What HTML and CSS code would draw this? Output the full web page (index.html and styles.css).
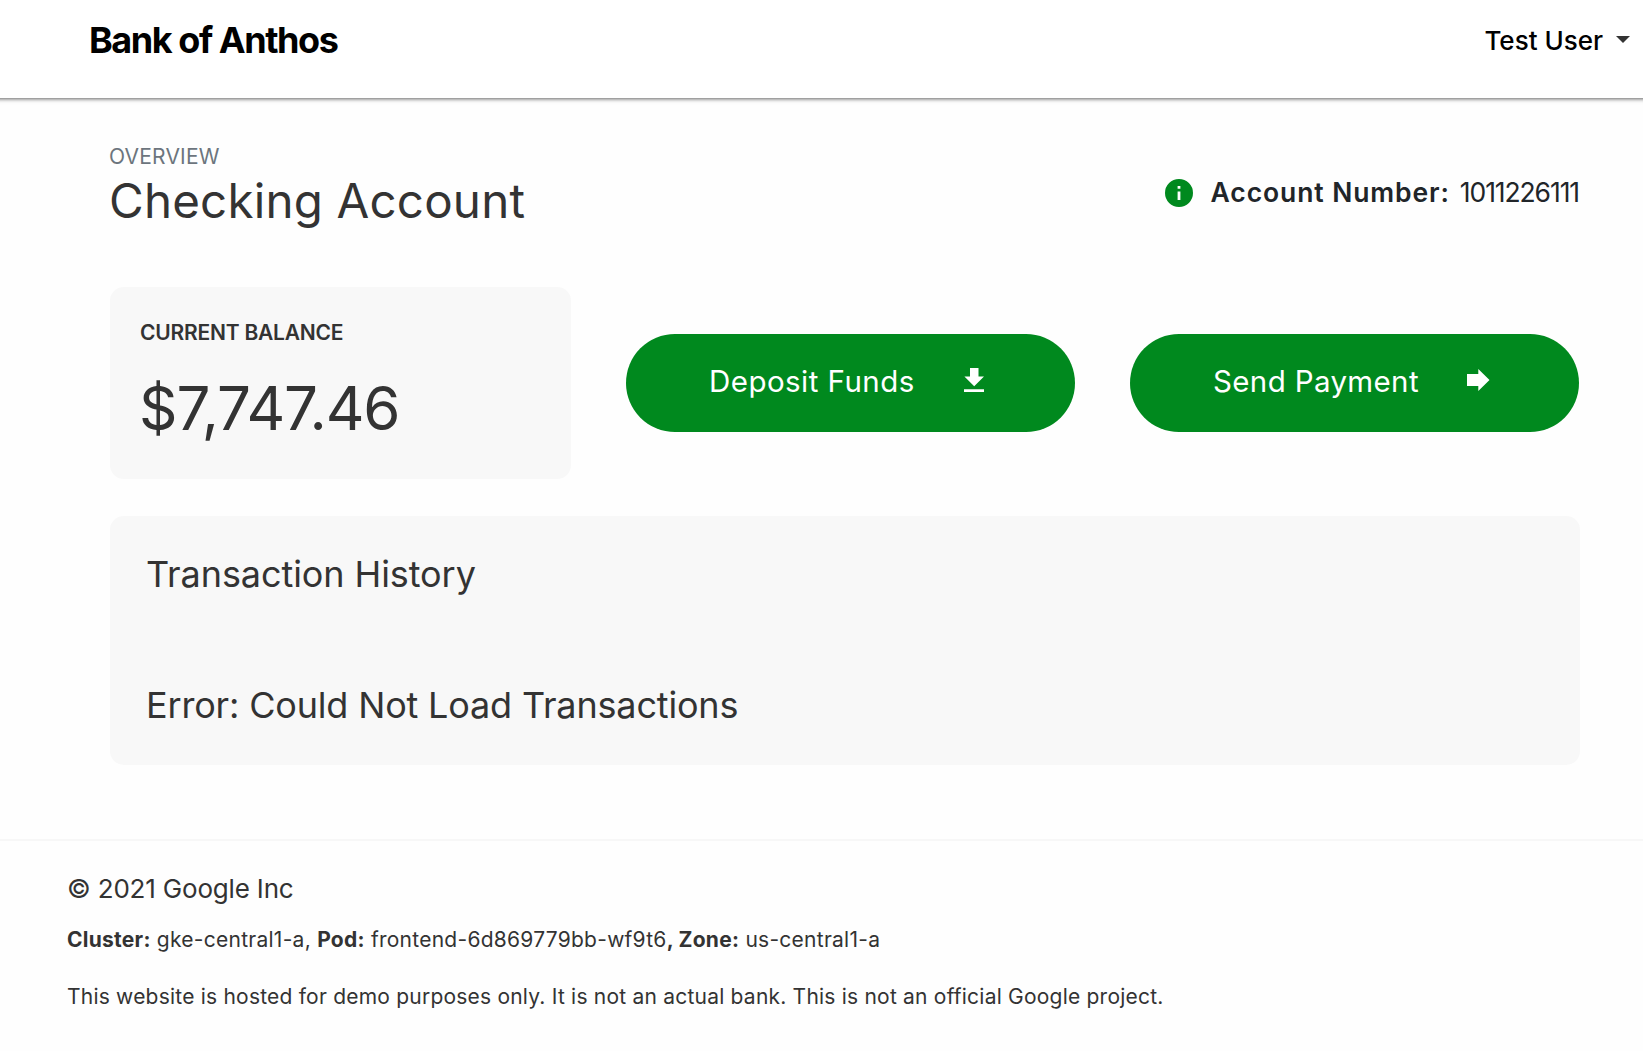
FILE: index.html
```html
<!DOCTYPE html>
<html lang="en">
<head>
<meta charset="utf-8">
<title>Bank of Anthos</title>
<link rel="stylesheet" href="styles.css">
</head>
<body>
<header class="navbar">
  <a class="brand">Bank of Anthos</a>
  <div class="user"><span>Test User</span><svg class="caret" viewBox="0 0 14 7"><path d="M0 0H14L7 7Z"/></svg></div>
</header>
<main class="main">
  <section class="heading">
    <div>
      <div class="overline">OVERVIEW</div>
      <h1 class="title">Checking Account</h1>
    </div>
    <div class="account">
      <svg class="info" viewBox="2 2 20 20"><path d="M12 2a10 10 0 1 0 0 20 10 10 0 0 0 0-20zm1 15h-2v-6h2zm0-8h-2V7h2z"/></svg>
      <b class="account-label">Account Number:</b><span class="account-number">1011226111</span>
    </div>
  </section>
  <section class="summary">
    <div class="card balance">
      <div class="balance-label">CURRENT BALANCE</div>
      <div class="balance-value">$7,747.46</div>
    </div>
    <button class="action deposit"><span>Deposit Funds</span><svg class="icon-down" viewBox="0 0 20 24"><path d="M6 0h8.5v8.5H20l-9.8 9.7L.4 8.500H6zM0 21.200h20V24H0z"/></svg></button>
    <button class="action send"><span>Send Payment</span><svg class="icon-right" viewBox="0 0 22.500 22"><path d="M0 5h11.300V0l11.200 11-11.200 11v-5H0z"/></svg></button>
  </section>
  <section class="card history">
    <h2 class="h2">Transaction History</h2>
    <h2 class="h2 error">Error: Could Not Load Transactions</h2>
  </section>
</main>
<footer class="footer">
  <p class="copyright">© 2021 Google Inc</p>
  <p class="meta"><b>Cluster:</b> gke-central1-a, <b>Pod:</b> frontend-6d869779bb-wf9t6<b>, Zone:</b> us-central1-a</p>
  <p class="note">This website is hosted for demo purposes only. It is not an actual bank. This is not an official Google project.</p>
</footer>
</body>
</html>
```
FILE: styles.css
```css
* { box-sizing: border-box; margin: 0; padding: 0; }
body { background: #fefefe; color: #333; font-family: Inter, "Liberation Sans", sans-serif; white-space: nowrap; overflow-x: hidden; }
h1, h2 { font-weight: 400; }
b { font-weight: 700; }
.navbar { height: 98px; margin: 0 -8px; display: flex; justify-content: space-between; background: #fff; padding: 0 21px 0 97px; box-shadow: 0 1px 4px rgba(0,0,0,.62); color: #000; }
.brand { font-size: 36px; line-height: 81px; font-weight: 650; letter-spacing: -1.45px; }
.user { display: flex; font-size: 26px; line-height: 82px; font-weight: 500; }
.caret { width: 14px; height: 7px; margin: 36px 0 0 13px; fill: #333; }
.main { padding: 42px 63px 0 110px; }
.heading { display: flex; justify-content: space-between; height: 90px; }
.overline { font-size: 21px; line-height: 34px; height: 32px; margin-left: -1px; letter-spacing: .2px; color: #6c757d; }
.title { font-size: 47.5px; line-height: 58px; margin-left: -1px; letter-spacing: .2px; }
.account { display: flex; align-items: center; height: 30px; margin-top: 37px; font-size: 26.5px; line-height: 30px; color: #212529; }
.account-label { font-weight: 600; letter-spacing: .9px; margin-top: -1px; }
.account-number { margin: -1px 1px 0 10px; letter-spacing: -1.1px; }
.info { width: 28px; height: 28px; margin: 2px 18px 0 0; fill: #00891e; }
.card { background: #f8f8f8; border-radius: 14px; }
.summary { display: flex; align-items: center; gap: 55px; margin-top: 57px; }
.balance { width: 461px; height: 192px; padding: 31px 30px; }
.balance-label { font-size: 21px; line-height: 30px; font-weight: 600; letter-spacing: -.22px; }
.balance-value { font-size: 60px; line-height: 72px; margin: 24px 0 0 -1px; letter-spacing: -1.1px; }
.action { width: 449px; height: 98px; border: 0; border-radius: 49px; background: #00891e; color: #fff; font: 400 29.5px/36px Inter, sans-serif; display: flex; align-items: center; padding: 0 0 4px 83px; }
.action svg { fill: #fff; }
.action span { width: 204px; }
.deposit { letter-spacing: .46px; }
.send { letter-spacing: .36px; }
.icon-down { width: 20px; height: 24px; margin: -2px 0 0 51px; }
.icon-right { width: 22.500px; height: 22px; margin: -2px 0 0 50px; }
.history { margin-top: 37px; height: 249px; padding: 36px; }
.h2 { font-size: 36px; line-height: 44px; letter-spacing: -.08px; }
.error { margin-top: 87px; letter-spacing: -.17px; }
.footer { margin-top: 74px; border-top: 2px solid #f7f7f7; padding: 30px 67px 0; }
.copyright { font-size: 26px; line-height: 36px; letter-spacing: -.18px; }
.meta { font-size: 21px; line-height: 30px; margin-top: 18px; letter-spacing: .26px; }
.note { font-size: 21px; line-height: 30px; margin-top: 27px; letter-spacing: .215px; }
```
